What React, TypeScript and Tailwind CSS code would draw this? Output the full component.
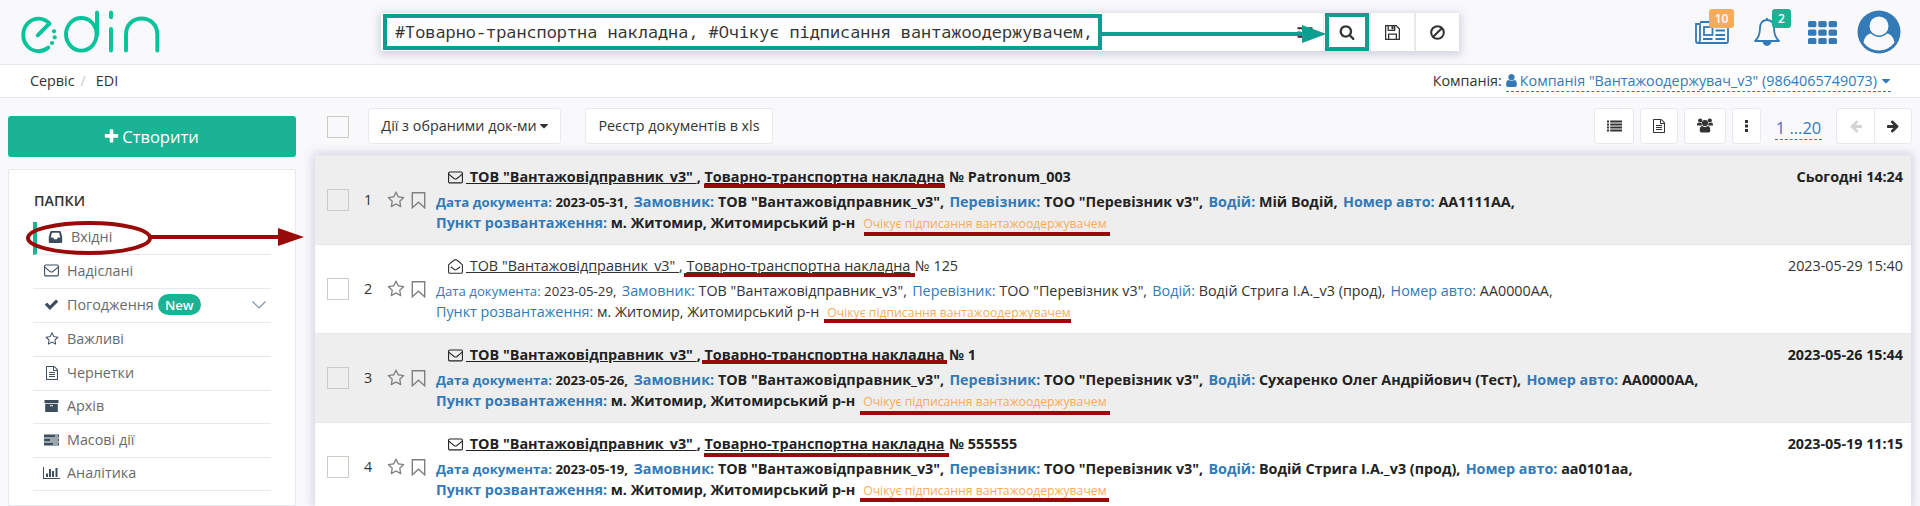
import React from "react";

const P = {
  arrow:
    "M1600 960q0 54-37 91l-651 651q-39 37-91 37-51 0-90-37l-75-75q-38-38-38-91t38-91l293-293h-704q-52 0-84.5-37.5t-32.5-90.5v-128q0-53 32.5-90.5t84.5-37.5h704l-293-294q-38-36-38-90t38-90l75-75q38-38 90-38 53 0 91 38l651 651q37 35 37 90z",
  plus: "M1600 736v192q0 40-28 68t-68 28h-416v416q0 40-28 68t-68 28h-192q-40 0-68-28t-28-68v-416h-416q-40 0-68-28t-28-68v-192q0-40 28-68t68-28h416v-416q0-40 28-68t68-28h192q40 0 68 28t28 68v416h416q40 0 68 28t28 68z",
  check:
    "M1671 566q0 40-28 68l-724 724-136 136q-28 28-68 28t-68-28l-136-136-362-362q-28-28-28-68t28-68l136-136q28-28 68-28t68 28l294 295 656-657q28-28 68-28t68 28l136 136q28 28 28 68z",
  search:
    "M1216 832q0-185-131.5-316.5t-316.5-131.5-316.5 131.5-131.5 316.5 131.5 316.5 316.5 131.5 316.5-131.5 131.5-316.5zm512 832q0 52-38 90t-90 38q-54 0-90-38l-343-342q-179 124-399 124-143 0-273.5-55.5t-225-150-150-225-55.5-273.5 55.5-273.5 150-225 225-150 273.5-55.5 273.5 55.5 225 150 150 225 55.5 273.5q0 220-124 399l343 343q37 37 37 90z",
  star: "M1201 1004l306-297-422-62-189-382-189 382-422 62 306 297-73 421 378-199 377 199zm527-357q0 22-26 48l-363 354 86 500q1 7 1 20 0 50-41 50-19 0-40-12l-449-236-449 236q-22 12-40 12-21 0-31.5-14.5t-10.5-35.5q0-6 2-20l86-500-364-354q-25-27-25-48 0-37 56-46l502-73 225-455q19-41 49-41t49 41l225 455 502 73q56 9 56 46z",
  file: "M1596 380q28 28 48 76t20 88v1152q0 40-28 68t-68 28h-1344q-40 0-68-28t-28-68v-1600q0-40 28-68t68-28h896q40 0 88 20t76 48zm-444-244v376h376q-10-29-22-41l-313-313q-12-12-41-22zm384 1528v-1024h-416q-40 0-68-28t-28-68v-416h-768v1536h1280zm-1024-864q0-14 9-23t23-9h704q14 0 23 9t9 23v64q0 14-9 23t-23 9h-704q-14 0-23-9t-9-23v-64zm736 224q14 0 23 9t9 23v64q0 14-9 23t-23 9h-704q-14 0-23-9t-9-23v-64q0-14 9-23t23-9h704zm0 256q14 0 23 9t9 23v64q0 14-9 23t-23 9h-704q-14 0-23-9t-9-23v-64q0-14 9-23t23-9h704z",
  user: "M1536 1399q0 109-62.5 187t-150.5 78h-854q-88 0-150.5-78t-62.5-187q0-85 8.5-160.5t31.5-152 58.5-131 94-89 134.5-34.5q131 128 313 128t313-128q76 0 134.5 34.5t94 89 58.5 131 31.5 152 8.5 160.5zm-256-887q0 159-112.5 271.5t-271.5 112.5-271.5-112.5-112.5-271.5 112.5-271.5 271.5-112.5 271.5 112.5 112.5 271.5z",
  caret: "M1408 704q0 26-19 45l-448 448q-19 19-45 19t-45-19l-448-448q-19-19-19-45t19-45 45-19h896q26 0 45 19t19 45z",
};

function Glyph({ d, className }: { d: string; className: string }) {
  return (
    <svg viewBox="0 0 1792 1792" fill="currentColor" className={`shrink-0 ${className}`}>
      <path d={d} />
    </svg>
  );
}

function Envelope({ open = false }: { open?: boolean }) {
  return (
    <svg viewBox="0 0 15 15" className="h-[15px] w-[15px] shrink-0" fill="none" stroke="currentColor" strokeWidth="1.1">
      {open ? (
        <>
          <path d="M.6 5.8 C2 4.5 5.2 1.8 6.3 1 Q7.5.3 8.7 1 C9.8 1.8 13 4.5 14.4 5.8 V13 Q14.4 14.3 13.2 14.3 H1.8 Q.6 14.3 .6 13Z" />
          <path d="M2.8 7.8 L6.4 10.5 Q7.5 11.2 8.6 10.5 L12.2 7.8" />
        </>
      ) : (
        <>
          <rect x=".6" y="2" width="13.8" height="10.9" rx="1.2" />
          <path d="M.8 4.2 C2.5 5.8 5 7.7 6.4 8.7 Q7.5 9.4 8.6 8.7 C10 7.7 12.5 5.8 14.2 4.2" />
        </>
      )}
    </svg>
  );
}

function Logo() {
  return (
    <svg width="141" height="44" viewBox="0 0 141 44" fill="none" stroke="#05c39a" strokeWidth="3.900" strokeLinecap="round" strokeLinejoin="round">
      <path d="M17.700 25.300 L29.500 13.500 A15.300 16.300 0 1 0 28.300 37.500" />
      <ellipse cx="61.300" cy="24.300" rx="15.300" ry="16.300" />
      <path d="M77 2.500 V25" />
      <path d="M91 2.500 V7.300 M91 19 V40.500" />
      <path d="M106 40.500 V24.500 C106 3.200 137.300 3.200 137.300 24.500 V40.500" />
      <g fill="#05c39a" stroke="none">
        <circle cx="34" cy="21.300" r="2.100" />
        <circle cx="34.700" cy="27.300" r="2.100" />
        <circle cx="32" cy="33" r="2.100" />
      </g>
    </svg>
  );
}

function SideIcon({ name }: { name: string }) {
  if (name === "check") return <Glyph d={P.check} className="h-[15px] w-[15px]" />;
  if (name === "star") return <Glyph d={P.star} className="h-[14px] w-[14px]" />;
  if (name === "file") return <Glyph d={P.file} className="h-[14px] w-[14px]" />;
  if (name === "mail") return <Envelope />;
  return (
    <svg viewBox="0 0 17 14" className="h-[14px] w-[17px] shrink-0" fill="currentColor">
      {name === "inbox" && (
        <path fillRule="evenodd" d="M4.200 1 H12.800 Q13.500 1 13.800 1.700 L15.200 7 V12 Q15.200 13 14.200 13 H2.800 Q1.800 13 1.800 12 V7 L3.200 1.700 Q3.500 1 4.200 1Z M5 2.800 L3.700 7.500 H6.300 L7 9.200 H10 L10.700 7.500 H13.300 L12 2.800Z" />
      )}
      {name === "archive" && (
        <path fillRule="evenodd" d="M1.500 1 H15.500 V4 H1.500Z M2.200 4.800 H14.800 V13 H2.200Z M7 6.200 V7.200 H10 V6.200Z" />
      )}
      {name === "server" && (
        <path fillRule="evenodd" d="M1 1.500 H16 V4.500 H1Z M12 2.500 V3.500 H15 V2.500Z M1 5.500 H16 V8.500 H1Z M7 6.500 V7.500 H15 V6.500Z M1 9.500 H16 V12.500 H1Z M10 10.500 V11.500 H15 V10.500Z" />
      )}
      {name === "chart" && <path d="M0 1 H1 V12 H17 V13 H0Z M3 7.500 H5 V11 H3Z M6 3 H8 V11 H6Z M9 5 H11 V11 H9Z M12.500 2 H14.500 V11 H12.500Z" />}
    </svg>
  );
}

const folders = [
  { name: "Вхідні", icon: "inbox", h: "h-[33px]" },
  { name: "Надіслані", icon: "mail", h: "h-[34px]" },
  { name: "Погодження", icon: "check", h: "h-[34px]" },
  { name: "Важливі", icon: "star", h: "h-[34px]" },
  { name: "Чернетки", icon: "file", h: "h-[34px]" },
  { name: "Архів", icon: "archive", h: "h-[33px]" },
  { name: "Масові дії", icon: "server", h: "h-[34px]" },
  { name: "Аналітика", icon: "chart", h: "h-[33px]" },
];

interface Doc {
  n: string;
  date: string;
  stamp: string;
  driver: string;
  car: string;
  read?: boolean;
}

const docs: Doc[] = [
  { n: "Patronum_003", date: "2023-05-31", stamp: "Сьогодні 14:24", driver: "Мій Водій", car: "AA1111AA" },
  { n: "125", date: "2023-05-29", stamp: "2023-05-29 15:40", driver: "Водій Стрига І.А._v3 (прод)", car: "AA0000AA", read: true },
  { n: "1", date: "2023-05-26", stamp: "2023-05-26 15:44", driver: "Сухаренко Олег Андрійович (Тест)", car: "AA0000AA" },
  { n: "555555", date: "2023-05-19", stamp: "2023-05-19 11:15", driver: "Водій Стрига І.А._v3 (прод)", car: "аа0101аа" },
];

function Field({ label, value }: { label: string; value: string }) {
  return (
    <span className="mr-[1.500px]">
      <span className="text-[#337ab7]">{label}:</span> {value},{" "}
    </span>
  );
}

function DocRow({ doc, index }: { doc: Doc; index: number }) {
  return (
    <div
      className={`flex h-[89px] shrink-0 border-b border-[#e7eaec] ${index % 2 ? "bg-white" : "bg-[#eeeeee]"} ${doc.read ? "text-[#333]" : "font-bold text-[#222]"}`}
    >
      <div className="flex h-full w-[121px] shrink-0 items-center pl-[12px] font-normal text-[#333]">
        <span className="h-[22px] w-[22px] shrink-0 border border-[#cfcac4]" />
        <span className="w-[38px] text-center">{index + 1}</span>
        <Glyph d={P.star} className="h-[18px] w-[18px] text-[#808080]" />
        <svg viewBox="0 0 14 17" className="ml-[6px] h-[17px] w-[15px]" fill="none" stroke="#808080" strokeWidth="1.4">
          <path d="M.8 .8 H13.200 V15.800 L7 10.300 L.8 15.800Z" />
        </svg>
      </div>
      <div className="flex min-w-0 grow flex-col pt-[9px] whitespace-pre">
        <div className="flex h-6 items-center pr-[8px] pl-[12px]">
          <Envelope open={doc.read} />
          <span className="ml-[3px] text-[14.400px] underline">{' ТОВ "Вантажовідправник_v3" '}</span>
          <span>{", "}</span>
          <span className="text-[14.400px] underline">Товарно-транспортна накладна</span>
          <span className="ml-px text-[14.400px]">{" № " + doc.n}</span>
          <span className="ml-auto">{doc.stamp}</span>
        </div>
        <div className="mt-[3px] h-[21px] leading-5">
          <span className="mr-[2px] text-[13.200px]">
            <span className="text-[#337ab7]">Дата документа:</span> {doc.date},{" "}
          </span>
          <Field label="Замовник" value='ТОВ "Вантажовідправник_v3"' />
          <Field label="Перевізник" value='ТОО "Перевізник v3"' />
          <Field label="Водій" value={doc.driver} />
          <Field label="Номер авто" value={doc.car} />
        </div>
        <div className="h-5 leading-5">
          <span className="text-[#337ab7]">Пункт розвантаження:</span> м. Житомир, Житомирський р-н
          <span className="ml-[8px] text-[12.200px] font-normal text-[#f8ac59]">Очікує підписання вантажоодержувачем</span>
        </div>
      </div>
    </div>
  );
}

const btn = "flex h-[36px] items-center justify-center rounded-[3px] border border-[#e7eaec] bg-white pb-px text-[#333]";

function Header() {
  return (
    <header className="flex h-[65px] shrink-0 items-start border-b border-[#e7eaec]">
      <div className="w-[381px] pt-[10px] pl-[20px]">
        <Logo />
      </div>
      <div className="mt-[13px] flex h-[38px] w-[1078px] bg-white text-[#333] shadow-[0_2px_8px_2px_rgba(150,155,180,0.4)]">
        <div className="flex grow items-center justify-between pr-[10px] pl-[14px]">
          <span className="font-[Noto_Sans_Mono,DejaVu_Sans_Mono,monospace] text-[16.880px] whitespace-pre">
            #Товарно-транспортна накладна, #Очікує підписання вантажоодержувачем,
          </span>
          <svg viewBox="0 0 14 14" className="h-[15px] w-[16px]" fill="currentColor">
            <path d="M0 2h7v2H0zM10 2h4v2h-4zM0 6h3v2H0zM6 6h8v2H6zM0 10h7v2H0zM10 10h4v2h-4z" />
          </svg>
        </div>
        <div className="flex w-[46px] items-center justify-center border-l border-[#e7eaec]">
          <Glyph d={P.search} className="h-[16px] w-[16px]" />
        </div>
        <div className="flex w-[45px] items-center justify-center border-l-2 border-[#e7eaec]">
          <svg viewBox="0 0 14 14" className="h-[15px] w-[15px]" fill="none" stroke="currentColor" strokeWidth="1.2">
            <path d="M.6 .6 H10.400 L13.400 3.600 V13.400 H.6Z M3.400 13.400 V8.600 H10.600 V13.400 M3 .6 V5 H9 V.6" />
            <path d="M6 1 H8 V4 H6Z" fill="currentColor" stroke="none" />
          </svg>
        </div>
        <div className="flex w-[45px] items-center justify-center border-l-2 border-[#e7eaec]">
          <svg viewBox="0 0 14 14" className="h-[15px] w-[15px]" fill="none" stroke="currentColor" strokeWidth="1.900">
            <circle cx="7" cy="7" r="5.900" />
            <path d="M3 11 L11 3" />
          </svg>
        </div>
      </div>
      <div className="ml-auto flex pt-[9px] pr-[19px] text-[#337ab7]">
        <div className="relative mr-[25px] w-[34px] pt-[12px]">
          <svg viewBox="0 0 34 23" className="h-[23px] w-[34px]" fill="none" stroke="currentColor" strokeWidth="1.800">
            <path d="M5 1 H32 Q33 1 33 2 V20.500 Q33 22 31.500 22 H3 Q1 22 1 20 V3 H5 V19.500 Q5 21.500 3 22" />
            <rect x="9" y="6" width="8.500" height="8" />
            <path d="M20.500 9.500 H30 M20.500 14 H30 M8 18 H17.500 M20.500 18 H30" />
          </svg>
          <span className="absolute top-0 left-[14px] flex h-[19px] w-[25px] items-center justify-center rounded-[3px] bg-[#f8ac59] text-[12px] font-semibold text-white">
            10
          </span>
        </div>
        <div className="relative mr-[28px] w-[26px] pt-[8px]">
          <svg viewBox="0 0 26 29" className="h-[29px] w-[26px]" fill="none" stroke="currentColor" strokeWidth="1.800" strokeLinejoin="round">
            <path d="M13 1 V3 M13 3 C8 3 6 7 6 11 C6 18 4.500 21 1 24 H25 C21.500 21 20 18 20 11 C20 7 18 3 13 3Z" />
            <path d="M9.500 24.500 A3.500 3.500 0 0 0 16.500 24.500Z" fill="currentColor" />
          </svg>
          <span className="absolute top-0 left-[18px] flex h-[19px] w-[19px] items-center justify-center rounded-[3px] bg-[#1ab394] text-[12px] font-semibold text-white">
            2
          </span>
        </div>
        <svg viewBox="0 0 29 23" className="mt-[12px] mr-[20px] h-[23px] w-[29px]" fill="currentColor">
          {[0, 10.3, 20.6].map((x) =>
            [0, 8.5, 17].map((y) => <rect key={`${x}-${y}`} x={x} y={y} width="8.400" height="6.200" rx="1.500" />)
          )}
        </svg>
        <svg viewBox="0 0 44 44" className="mt-[1px] h-[44px] w-[44px]">
          <circle cx="22" cy="22" r="21.500" fill="currentColor" />
          <circle cx="22" cy="16" r="9.500" fill="#f9f9fc" />
          <path d="M6.500 32.500 C7.500 27.500 10 24 14 23.500 C18.500 28 25.500 28 30 23.500 C34 24 36.500 27.500 37.500 32.500 C30 43 14 43 6.500 32.500Z" fill="#f9f9fc" />
        </svg>
      </div>
    </header>
  );
}

function Crumbs() {
  return (
    <div className="flex h-[33px] shrink-0 items-center border-b border-[#e7eaec] bg-white pr-[29px] pl-[30px] text-[#333]">
      <span>Сервіс</span>
      <span className="ml-[6px] text-[#ccc]">/</span>
      <span className="ml-[10px]">EDI</span>
      <span className="ml-auto">Компанія:</span>
      <span className="ml-[4px] flex items-center border-b border-dashed border-[#337ab7] text-[#337ab7]">
        <Glyph d={P.user} className="mr-[1px] -ml-[2px] h-[15px] w-[15px]" />
        Компанія "Вантажоодержувач_v3" (9864065749073)
        <Glyph d={P.caret} className="-mr-[2px] ml-[2px] h-[14px] w-[14px]" />
      </span>
    </div>
  );
}

function Sidebar() {
  return (
    <aside className="flex w-[296px] shrink-0 flex-col pl-[8px]">
      <button className="mt-[18px] flex h-[41px] shrink-0 items-center justify-center rounded-[3px] bg-[#1ab394] pr-[2px] text-[16.500px] text-white">
        <Glyph d={P.plus} className="mr-[2px] h-[17px] w-[17px]" />
        Створити
      </button>
      <nav className="mt-[12px] grow border border-[#e7eaec] bg-white pt-[21px] pr-[24px] pl-[24px] text-[#676a6c]">
        <h2 className="mb-[11px] h-5 pl-px text-[14.340px] leading-5 font-semibold text-[#333]">ПАПКИ</h2>
        {folders.map((f, i) => (
          <div key={f.name} className={`flex items-center border-b border-[#e7eaec] pb-[2px] ${f.h} ${i === 0 ? "border-l-4 border-l-[#1ab394] pl-[9px]" : "pl-[9px]"}`}>
            <span className="flex w-[19px] justify-center text-[#3d4d5d]">
              <SideIcon name={f.icon} />
            </span>
            <span className="ml-[6px]">{f.name}</span>
            {f.icon === "check" && (
              <>
                <span className="ml-[4px] flex h-[21px] w-[43px] items-center justify-center rounded-full bg-[#1ab394] text-[13.200px] font-semibold text-white">
                  New
                </span>
                <svg viewBox="0 0 14 8" className="mr-[5px] ml-auto h-[8px] w-[14px]" fill="none" stroke="#7d91ab" strokeWidth="1.100">
                  <path d="M.5 .5 L7 7 L13.500 .5" />
                </svg>
              </>
            )}
          </div>
        ))}
      </nav>
    </aside>
  );
}

function Toolbar() {
  return (
    <div className="flex h-[57px] shrink-0 items-start pt-[10px] pr-[8px] pl-[12px]">
      <span className="mt-[8px] h-[22px] w-[22px] border border-[#cfcac4]" />
      <div className={`${btn} ml-[19px] w-[193px]`}>
        Дії з обраними док-ми
        <Glyph d={P.caret} className="-mr-[3px] h-[14px] w-[14px]" />
      </div>
      <div className={`${btn} ml-[24px] w-[188px]`}>Реєстр документів в xls</div>
      <div className={`${btn} ml-auto w-[40px]`}>
        <svg viewBox="0 0 15 12" className="h-[12px] w-[15px]" fill="currentColor">
          <path d="M0 .5h2v2H0zM3.200 .5H15v2H3.200zM0 3.500h2v2H0zM3.200 3.500H15v2H3.200zM0 6.500h2v2H0zM3.200 6.500H15v2H3.200zM0 9.500h2v2H0zM3.200 9.500H15v2H3.200z" />
        </svg>
      </div>
      <div className={`${btn} ml-[6px] w-[38px]`}>
        <Glyph d={P.file} className="h-[14px] w-[14px]" />
      </div>
      <div className={`${btn} ml-[6px] w-[42px]`}>
        <svg viewBox="0 0 16 15" className="h-[15px] w-[16px]" fill="currentColor">
          <circle cx="3.200" cy="2.500" r="2.100" />
          <circle cx="12.800" cy="2.500" r="2.100" />
          <path d="M0 7.500 Q0 4.500 1.500 4.500 Q3 5.500 4.500 4.800 Q4.500 6.500 5 7.500Z M16 7.500 Q16 4.500 14.500 4.500 Q13 5.500 11.500 4.800 Q11.500 6.500 11 7.500Z" />
          <circle cx="8" cy="5" r="3.100" />
          <path d="M2.700 12.500 Q2.700 8 5.300 8 Q8 10 10.700 8 Q13.300 8 13.300 12.500 Q13.300 14.500 11.500 14.500 H4.500 Q2.700 14.500 2.700 12.500Z" />
        </svg>
      </div>
      <div className={`${btn} ml-[6px] w-[29px]`}>
        <svg viewBox="0 0 3 12" className="h-[12px] w-[3px]" fill="currentColor">
          <path d="M0 0h3v3H0zM0 4.500h3v3H0zM0 9h3v3H0z" />
        </svg>
      </div>
      <span className="mt-[8px] ml-[14px] h-[24px] w-[47px] border-b border-dashed border-[#337ab7] text-center text-[16.500px] leading-[24px] text-[#337ab7]">
        1 ...20
      </span>
      <div className={`${btn} ml-[14px] w-[38px] rounded-r-none border-r-0 text-[#d5d5d5]!`}>
        <Glyph d={P.arrow} className="h-[14px] w-[14px] -scale-x-100" />
      </div>
      <div className={`${btn} w-[38px] rounded-l-none`}>
        <Glyph d={P.arrow} className="h-[14px] w-[14px]" />
      </div>
    </div>
  );
}

const strokes = [
  { x: 704, y: 184, w: 241 },
  { x: 864, y: 232, w: 246 },
  { x: 684, y: 273, w: 231 },
  { x: 824, y: 319, w: 247 },
  { x: 702, y: 360, w: 245 },
  { x: 860, y: 411, w: 250 },
  { x: 704, y: 453, w: 245 },
  { x: 860, y: 498, w: 249 },
];

function Annotations() {
  return (
    <svg className="pointer-events-none absolute inset-0" width="1920" height="506" fill="none">
      <g stroke="#0d9e92" strokeWidth="4">
        <rect x="385" y="16" width="715" height="32" />
        <rect x="1327" y="15" width="40" height="34" />
        <path d="M1102 34 H1304" />
        <path d="M1302 25 V43 L1326.500 34Z" fill="#0d9e92" stroke="none" />
      </g>
      <g stroke="#990b0b" strokeWidth="4">
        <ellipse cx="89" cy="238" rx="61" ry="15" />
        <path d="M151 237 H280" />
        <path d="M278 228 V246 L304 237Z" fill="#990b0b" stroke="none" />
      </g>
      {strokes.map((s) => (
        <rect key={s.y} x={s.x} y={s.y} width={s.w} height="4" fill="#990b0b" />
      ))}
    </svg>
  );
}

export default function App() {
  return (
    <div className="relative flex h-[506px] w-[1920px] flex-col overflow-hidden bg-[#f9f9fc] font-['Open_Sans','Noto_Sans',sans-serif] text-[14.340px] leading-5">
      <Header />
      <Crumbs />
      <div className="flex min-h-0 grow">
        <Sidebar />
        <main className="flex min-w-0 grow flex-col pl-[19px]">
          <Toolbar />
          <div className="mr-[9px] flex min-h-0 grow flex-col border-t border-[#e7eaec] shadow-[0_0_9px_2px_rgba(150,155,185,0.4)]">
            {docs.map((d, i) => (
              <DocRow key={d.n} doc={d} index={i} />
            ))}
          </div>
        </main>
      </div>
      <Annotations />
    </div>
  );
}
